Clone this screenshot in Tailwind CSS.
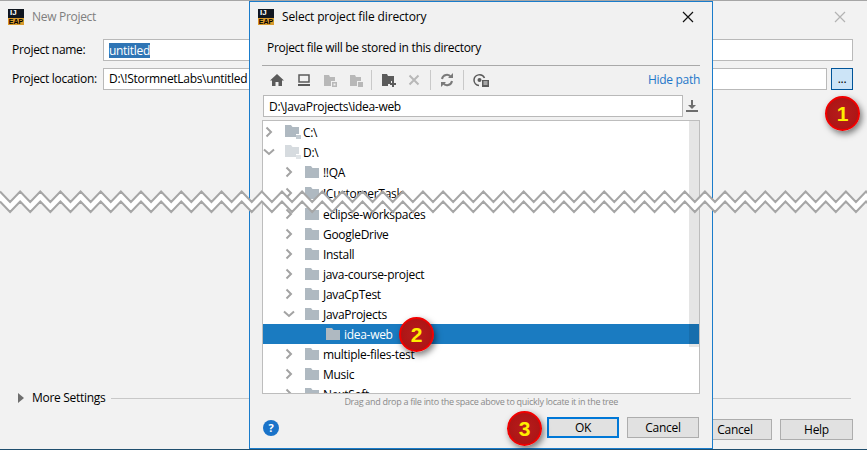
<!DOCTYPE html>
<html lang="en">
<head>
<meta charset="UTF-8" />
<title>New Project</title>
<script src="https://cdn.jsdelivr.net/npm/@tailwindcss/browser@4"></script>
</head>
<body class="overflow-hidden">
<svg width="0" height="0" class="absolute">
  <symbol id="folder" viewBox="0 0 14 12"><path d="M0 0H6L7.5 2H14V12H0Z" fill="#afb9c1"/></symbol>
  <symbol id="drive" viewBox="0 0 16 14"><path d="M0 0H6L7.5 2H14V9H11V12H0Z" fill="#afb9c1"/><path d="M11 10H16V14H11Z" fill="#c3cbd1"/></symbol>
  <symbol id="right" viewBox="0 0 10 12"><path d="M2.5 1.5L7 6L2.5 10.5" fill="none" stroke="#a3a3a3" stroke-width="2"/></symbol>
  <symbol id="down" viewBox="0 0 12 10"><path d="M1 2.5L6 7L11 2.5" fill="none" stroke="#a3a3a3" stroke-width="2"/></symbol>
</svg>

<div class="relative w-[867px] h-[450px] overflow-hidden bg-[#f2f2f2] border-t border-b border-t-[#a6a6a6] border-b-[#1f4e6e] font-['Open_Sans',sans-serif] text-[12px] tracking-[-0.3px] text-black">

  <!-- back window -->
  <div class="flex flex-col h-full">
    <div class="flex items-center h-[31px] pl-2 pr-[21px] shrink-0">
      <div class="w-4 h-4 bg-[#10161f] flex flex-col justify-between overflow-hidden tracking-normal">
        <span class="text-white font-['Liberation_Sans'] font-bold text-[8px] leading-[8px] pl-[2px]">IJ</span>
        <span class="bg-[#d99a2b] text-black font-['Liberation_Sans'] font-bold text-[7px] leading-[7px] text-center">EAP</span>
      </div>
      <span class="ml-2 text-[#7f7f7f]">New Project</span>
      <svg class="ml-auto" width="12" height="12" viewBox="0 0 12 12"><path d="M1 1L11 11M11 1L1 11" stroke="#b3b3b3" stroke-width="1.2"/></svg>
    </div>
    <div class="flex items-center ml-3 mr-[14px] mt-[7px] h-[22px]">
      <span class="w-[91px]">Project name:</span>
      <div class="flex-1 h-full bg-white border border-[#b9b9b9] pl-[5px] flex items-center"><span class="bg-[#2f75b5] text-white leading-[15px]">untitled</span></div>
    </div>
    <div class="flex items-center ml-3 mr-[14px] mt-[7px] h-[22px]">
      <span class="w-[91px]">Project location:</span>
      <div class="flex-1 h-full bg-white border border-[#b9b9b9] pl-[5px] flex items-center">D:\!StormnetLabs\untitled</div>
      <div class="ml-1 w-[22px] h-full bg-[#cce4f7] border border-[#005499] flex items-center justify-center">...</div>
    </div>
    <div class="flex items-center mt-auto ml-[18px] mr-4 h-[18px]">
      <svg width="6" height="10" viewBox="0 0 6 10"><path d="M0 0L6 5L0 10Z" fill="#6e6e6e"/></svg>
      <span class="ml-2">More Settings</span>
      <div class="flex-1 ml-[6px] h-px bg-[#c8c8c8]"></div>
    </div>
    <div class="flex justify-end gap-2 mr-[14px] mt-3 mb-[9px]">
      <div class="w-[77px] h-[21px] bg-[#e1e1e1] border border-[#adadad] flex items-center justify-center pl-[3px]">Cancel</div>
      <div class="w-[73px] h-[21px] bg-[#e1e1e1] border border-[#adadad] flex items-center justify-center">Help</div>
    </div>
  </div>

  <!-- file chooser dialog -->
  <div class="absolute left-[249px] top-0 w-[464px] h-[448px] bg-[#f1f1f1] border border-[#1a7ccb] flex flex-col">
    <div class="flex items-center h-[30px] pl-2 pr-[18px] shrink-0">
      <div class="w-4 h-4 bg-[#10161f] flex flex-col justify-between overflow-hidden tracking-normal">
        <span class="text-white font-['Liberation_Sans'] font-bold text-[8px] leading-[8px] pl-[2px]">IJ</span>
        <span class="bg-[#d99a2b] text-black font-['Liberation_Sans'] font-bold text-[7px] leading-[7px] text-center">EAP</span>
      </div>
      <span class="ml-2 tracking-[-0.15px]">Select project file directory</span>
      <svg class="ml-auto" width="12" height="12" viewBox="0 0 12 12"><path d="M1 1L11 11M11 1L1 11" stroke="#111" stroke-width="1.2"/></svg>
    </div>
    <div class="ml-[17px] mt-2 h-4 leading-4">Project file will be stored in this directory</div>
    <div class="mx-3 mt-[9px] h-px bg-[#a9a9a9]"></div>

    <!-- toolbar -->
    <div class="flex items-center h-7 ml-5 mr-3 shrink-0">
      <svg width="14" height="14" viewBox="0 0 14 14"><path d="M7 1L14 7.5H12V13H8.500V9H5.500V13H2V7.500H0Z" fill="#5b5b5b"/></svg>
      <svg class="ml-[13px]" width="14" height="14" viewBox="0 0 14 14"><path d="M2 2H12V9H2Z" fill="none" stroke="#5b5b5b" stroke-width="1.500"/><path d="M1 11H13V13H1Z" fill="#5b5b5b"/></svg>
      <svg class="ml-3" width="14" height="14" viewBox="0 0 14 14"><path d="M1 2H6L7 4H12V8H8V13H1Z" fill="#b8b8b8"/><path d="M9 9H14V14H9ZM10.500 10.500V12.500H12.500V10.500Z" fill="#b8b8b8" fill-rule="evenodd"/></svg>
      <svg class="ml-3" width="14" height="14" viewBox="0 0 14 14"><path d="M1 2H6L7 4H12V8H8V13H1Z" fill="#b8b8b8"/><path d="M9 9H14V14H9Z" fill="#b8b8b8"/></svg>
      <div class="ml-2 w-px h-5 bg-[#c9c9c9]"></div>
      <svg class="ml-[10px]" width="14" height="14" viewBox="0 0 14 14"><path d="M0 1H5L6 3H12V8H9V11H6V13H0Z" fill="#5b5b5b"/><path d="M10 8H12V10H14V12H12V14H10V12H8V10H10Z" fill="#5b5b5b"/></svg>
      <svg class="ml-3" width="12" height="12" viewBox="0 0 12 12"><path d="M1.500 1.500L10.500 10.500M10.500 1.500L1.500 10.500" stroke="#b8b8b8" stroke-width="2"/></svg>
      <div class="ml-[10px] w-px h-5 bg-[#c9c9c9]"></div>
      <svg class="ml-[9px]" width="14" height="14" viewBox="0 0 14 14"><path d="M2 6A5 5 0 0 1 11 4M12 8A5 5 0 0 1 3 10" fill="none" stroke="#7a7a7a" stroke-width="2"/><path d="M8 5H13V0ZM6 9H1V14Z" fill="#7a7a7a"/></svg>
      <div class="ml-[9px] w-px h-5 bg-[#c9c9c9]"></div>
      <svg class="ml-[9px]" width="16" height="14" viewBox="0 0 16 14"><path d="M1 7A5.500 5.500 0 0 1 11.500 5M6 12.500A5.500 5.500 0 0 1 1 7" fill="none" stroke="#5b5b5b" stroke-width="1.500"/><circle cx="6.500" cy="7" r="2" fill="#5b5b5b"/><path d="M9 7H16V14H9Z" fill="#5b5b5b"/><path d="M10.500 9H14.500M10.500 11H14.500" stroke="#f1f1f1"/></svg>
      <span class="ml-auto text-[#1f77c9]">Hide path</span>
    </div>

    <!-- path field -->
    <div class="flex items-center ml-[13px] mr-3 h-[22px] mt-px shrink-0">
      <div class="flex-1 h-full bg-white border border-[#b9b9b9] pl-[5px] pt-[2px] flex items-center">D:\JavaProjects\idea-web</div>
      <svg class="ml-[3px] mr-[2px]" width="12" height="12" viewBox="0 0 12 12"><path d="M5 0H7V5H10L6 9L2 5H5ZM0 10H12V12H0Z" fill="#6e6e6e"/></svg>
    </div>

    <!-- tree -->
    <div class="relative mx-3 mt-[3px] h-[274px] pt-px bg-white border border-[#bdbdbd] overflow-hidden shrink-0">
      <div class="flex items-center h-5 pl-px"><svg width="10" height="12"><use href="#right"/></svg><svg class="ml-[11px]" width="16" height="14"><use href="#drive"/></svg><span class="ml-[2px] pt-[2px]">C:\</span></div>
      <div class="flex items-center h-5"><svg width="12" height="10"><use href="#down"/></svg><svg class="ml-[10px] opacity-50" width="16" height="14"><use href="#drive"/></svg><span class="ml-[2px] pt-[2px]">D:\</span></div>
      <div class="flex items-center h-5 pl-[21px]"><svg width="10" height="12"><use href="#right"/></svg><svg class="ml-[11px]" width="14" height="12"><use href="#folder"/></svg><span class="ml-1 pt-[2px]">!!QA</span></div>
      <div class="flex items-center h-[22px] pl-[21px]"><svg width="10" height="12"><use href="#right"/></svg><svg class="ml-[11px]" width="14" height="12"><use href="#folder"/></svg><span class="ml-1 pt-[2px]">!CustomerTask</span></div>
      <div class="flex items-center h-5 pl-[21px]"><svg width="10" height="12"><use href="#right"/></svg><svg class="ml-[11px]" width="14" height="12"><use href="#folder"/></svg><span class="ml-1 pt-[2px]">eclipse-workspaces</span></div>
      <div class="flex items-center h-5 pl-[21px]"><svg width="10" height="12"><use href="#right"/></svg><svg class="ml-[11px]" width="14" height="12"><use href="#folder"/></svg><span class="ml-1 pt-[2px]">GoogleDrive</span></div>
      <div class="flex items-center h-5 pl-[21px]"><svg width="10" height="12"><use href="#right"/></svg><svg class="ml-[11px]" width="14" height="12"><use href="#folder"/></svg><span class="ml-1 pt-[2px]">Install</span></div>
      <div class="flex items-center h-5 pl-[21px]"><svg width="10" height="12"><use href="#right"/></svg><svg class="ml-[11px]" width="14" height="12"><use href="#folder"/></svg><span class="ml-1 pt-[2px]">java-course-project</span></div>
      <div class="flex items-center h-5 pl-[21px]"><svg width="10" height="12"><use href="#right"/></svg><svg class="ml-[11px]" width="14" height="12"><use href="#folder"/></svg><span class="ml-1 pt-[2px]">JavaCpTest</span></div>
      <div class="flex items-center h-5 pl-5"><svg width="12" height="10"><use href="#down"/></svg><svg class="ml-[10px]" width="14" height="12"><use href="#folder"/></svg><span class="ml-1 pt-[2px]">JavaProjects</span></div>
      <div class="flex items-center h-5 pl-[63px] bg-[#1a7bc1] text-white"><svg width="14" height="12"><use href="#folder"/></svg><span class="ml-1 pt-[2px]">idea-web</span></div>
      <div class="flex items-center h-5 pl-[21px]"><svg width="10" height="12"><use href="#right"/></svg><svg class="ml-[11px]" width="14" height="12"><use href="#folder"/></svg><span class="ml-1 pt-[2px]">multiple-files-test</span></div>
      <div class="flex items-center h-5 pl-[21px]"><svg width="10" height="12"><use href="#right"/></svg><svg class="ml-[11px]" width="14" height="12"><use href="#folder"/></svg><span class="ml-1 pt-[2px]">Music</span></div>
      <div class="flex items-center h-5 pl-[21px]"><svg width="10" height="12"><use href="#right"/></svg><svg class="ml-[11px]" width="14" height="12"><use href="#folder"/></svg><span class="ml-1 pt-[2px]">NextSoft</span></div>
      <div class="absolute right-0 top-0 w-[10px] h-[226px] bg-black/10"></div>
    </div>
    <div class="mt-px text-right mr-[94px] text-[9px] leading-[14px] text-[#8a8a8a]">Drag and drop a file into the space above to quickly locate it in the tree</div>

    <!-- footer -->
    <div class="flex items-center mx-[13px] mt-2">
      <div class="w-4 h-4 rounded-full bg-[#1a73c9] text-white font-bold text-[11px] leading-4 text-center">?</div>
      <div class="ml-auto w-[72px] h-[21px] bg-[#e1e1e1] border-2 border-[#0078d7] flex items-center justify-center">OK</div>
      <div class="ml-2 w-[72px] h-[21px] bg-[#e1e1e1] border border-[#adadad] flex items-center justify-center">Cancel</div>
    </div>
  </div>

  <!-- torn edge across the page -->
  <svg class="absolute left-0 top-[188px]" width="867" height="26" viewBox="0 189 867 26">
    <path id="tearFill" fill="#fff"/>
    <path id="tearTop" fill="none" stroke="#a6a6a6" stroke-width="2"/>
    <path id="tearBottom" fill="none" stroke="#a6a6a6" stroke-width="2"/>
  </svg>

  <!-- numbered callouts -->
  <div class="absolute left-[825px] top-[95px] w-[35px] h-[35px] rounded-full border-2 border-[#f00000] bg-[radial-gradient(circle,#b81c1c,#a81313)] shadow-[2px_3px_6px_rgba(0,0,0,0.5)] flex items-center justify-center font-['Liberation_Sans'] font-bold text-[21px] tracking-normal text-[#ffee00]">1</div>
  <div class="absolute left-[399px] top-[316px] w-[35px] h-[35px] rounded-full border-2 border-[#f00000] bg-[radial-gradient(circle,#b81c1c,#a81313)] shadow-[2px_3px_6px_rgba(0,0,0,0.5)] flex items-center justify-center font-['Liberation_Sans'] font-bold text-[21px] tracking-normal text-[#ffee00]">2</div>
  <div class="absolute left-[507px] top-[410px] w-[35px] h-[35px] rounded-full border-2 border-[#f00000] bg-[radial-gradient(circle,#b81c1c,#a81313)] shadow-[2px_3px_6px_rgba(0,0,0,0.5)] flex items-center justify-center font-['Liberation_Sans'] font-bold text-[21px] tracking-normal text-[#ffee00]">3</div>
</div>

<script>
  // zigzag band: peaks every ~20px
  const zig = (offset) => {
    const pts = [];
    for (let i = 0; i <= 88; i++) {
      pts.push([i * 10.07, (i % 2 ? 202 : 191.5) + offset]);
    }
    return pts;
  };
  const upper = zig(0), lower = zig(10);
  const toPath = (pts) => "M" + pts.map((p) => p.join(" ")).join("L");
  document.querySelector("#tearTop").setAttribute("d", toPath(upper));
  document.querySelector("#tearBottom").setAttribute("d", toPath(lower));
  document.querySelector("#tearFill").setAttribute("d", toPath(upper.concat(lower.slice().reverse())) + "Z");
</script>
</body>
</html>
